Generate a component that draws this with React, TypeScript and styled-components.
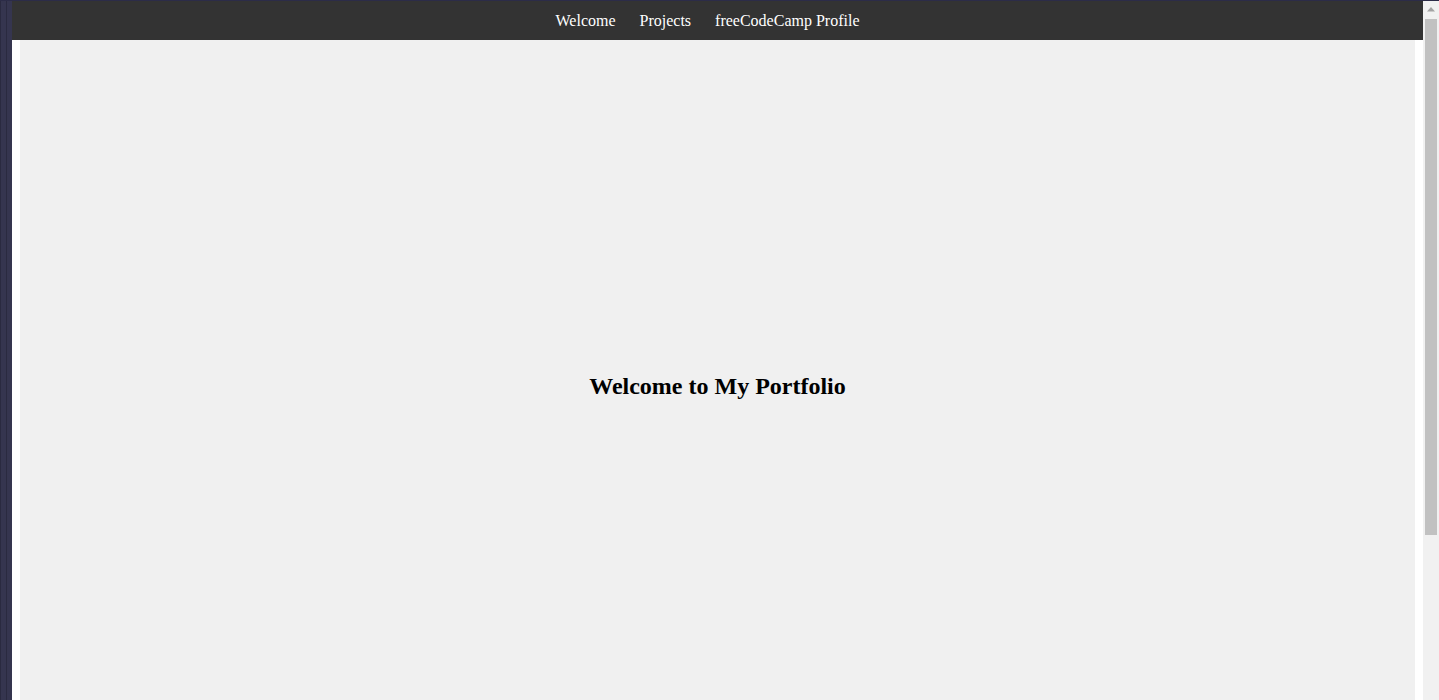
import React from "react";
import styled, { createGlobalStyle } from "styled-components";

const Global = createGlobalStyle`
  html, body { margin: 0; padding: 0; background: #ffffff; overflow: hidden; }
  #root { width: 1439px; height: 700px; }
`;

const Frame = styled.div`
  display: flex;
  flex-direction: column;
  width: 1439px;
  height: 700px;
  overflow: hidden;
  background: #ffffff;
`;

const TopEdge = styled.div`
  height: 1px;
  flex: none;
  background: #2c2c48;
`;

const Body = styled.div`
  display: flex;
  flex: 1;
  min-height: 0;
`;

const SideStrip = styled.div`
  width: 12px;
  flex: none;
  display: flex;
  background: #2b2b44;
`;

const StripBand = styled.div<{ $w: number }>`
  width: ${(p) => p.$w}px;
  background: #35354f;
  border-left: 1px solid #2a2a40;
`;

const Viewport = styled.div`
  flex: 1;
  display: flex;
  flex-direction: column;
  min-width: 0;
  overflow: hidden;
`;

const NavBar = styled.nav`
  height: 39px;
  flex: none;
  background: #333333;
  display: flex;
  justify-content: center;
  align-items: center;
  gap: 24px;
  padding-right: 20px;
`;

const NavLink = styled.a`
  color: #ffffff;
  text-decoration: none;
  font-family: "Liberation Serif", "Times New Roman", serif;
  font-size: 16px;
`;

const Page = styled.main`
  padding: 0 8px;
  background: #ffffff;
`;

const WelcomeSection = styled.section`
  height: 693px;
  background: #f0f0f0;
  display: flex;
  justify-content: center;
  align-items: center;
`;

const Heading = styled.h1`
  margin: 0;
  font-family: "Liberation Serif", "Times New Roman", serif;
  font-size: 24px;
  font-weight: bold;
  color: #000000;
`;

const ScrollBar = styled.div`
  width: 16px;
  flex: none;
  background: #f1f1f1;
  display: flex;
  flex-direction: column;
  align-items: center;
`;

const ArrowButton = styled.div`
  width: 16px;
  height: 17px;
  flex: none;
  display: flex;
  justify-content: center;
  align-items: center;
`;

const Thumb = styled.div`
  width: 12px;
  height: 516px;
  margin-top: 1px;
  margin-left: 2px;
  background: #c1c1c1;
  align-self: flex-start;
`;

export default function App() {
  return (
    <Frame>
      <Global />
      <TopEdge />
      <Body>
        <SideStrip>
          <StripBand $w={6} />
          <StripBand $w={5} />
        </SideStrip>
        <Viewport>
          <NavBar>
            <NavLink href="#welcome">Welcome</NavLink>
            <NavLink href="#projects">Projects</NavLink>
            <NavLink href="#profile">freeCodeCamp Profile</NavLink>
          </NavBar>
          <Page>
            <WelcomeSection id="welcome">
              <Heading>Welcome to My Portfolio</Heading>
            </WelcomeSection>
          </Page>
        </Viewport>
        <ScrollBar>
          <ArrowButton>
            <svg width="8" height="5" viewBox="0 0 8 5">
              <polygon points="4,0 8,4.5 0,4.5" fill="#a3a3a3" />
            </svg>
          </ArrowButton>
          <Thumb />
        </ScrollBar>
      </Body>
    </Frame>
  );
}
